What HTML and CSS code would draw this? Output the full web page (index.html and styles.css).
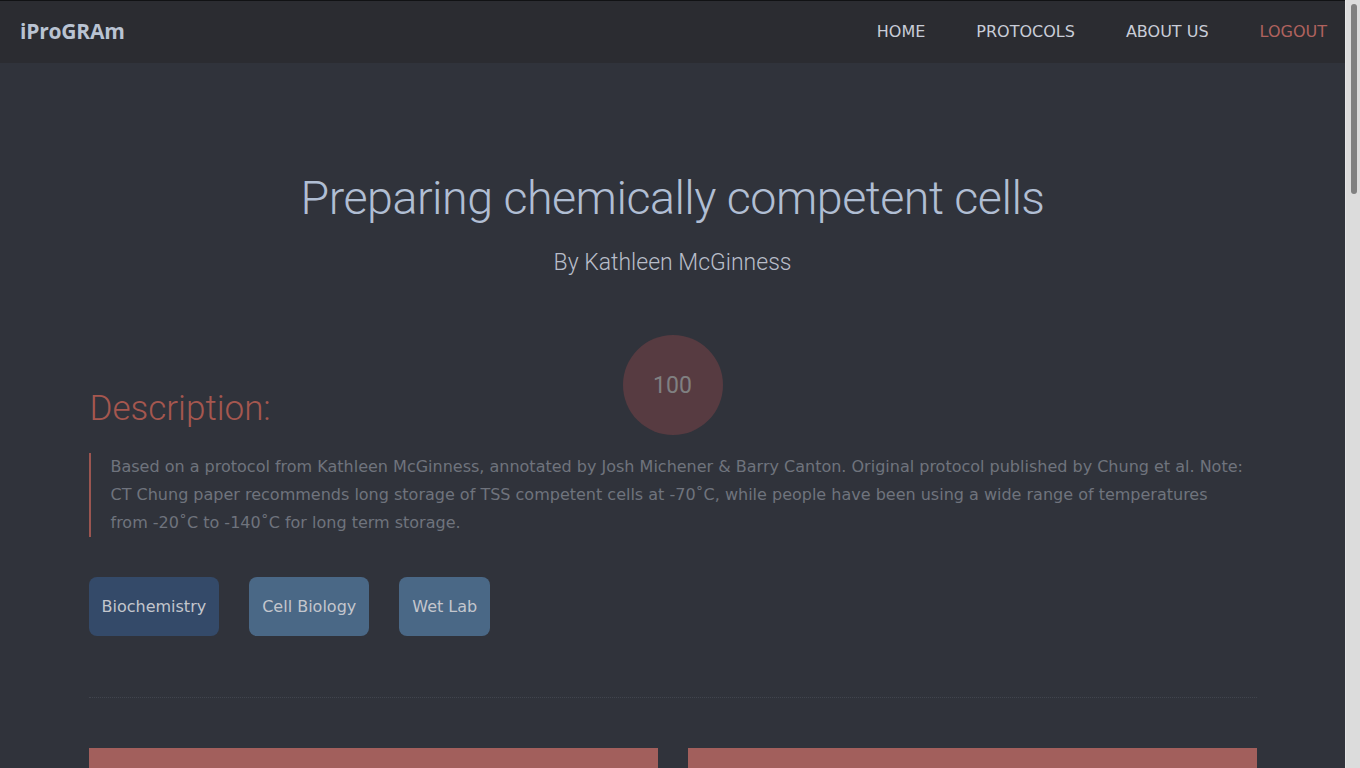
FILE: index.html
```html
<!DOCTYPE html>
<html lang="en">
<head>
<meta charset="utf-8">
<title>iProGRAm - Preparing chemically competent cells</title>
<link rel="stylesheet" href="styles.css">
</head>
<body>
<div class="viewport">
  <header class="navbar">
    <a class="brand" href="#">iProGRAm</a>
    <nav class="nav">
      <a href="#" class="nav-link">HOME</a>
      <a href="#" class="nav-link">PROTOCOLS</a>
      <a href="#" class="nav-link">ABOUT US</a>
      <a href="#" class="nav-link logout">LOGOUT</a>
    </nav>
  </header>
  <main class="page">
    <section class="hero">
      <h1 class="title">Preparing chemically competent cells</h1>
      <p class="author">By Kathleen McGinness</p>
    </section>
    <div class="container">
      <div class="desc-head">
        <div class="score">100</div>
        <h2 class="desc-title">Description:</h2>
      </div>
      <blockquote class="desc">Based on a protocol from Kathleen McGinness, annotated by Josh Michener &amp; Barry Canton. Original protocol published by Chung et al. Note: CT Chung paper recommends long storage of TSS competent cells at -70˚C, while people have been using a wide range of temperatures from -20˚C to -140˚C for long term storage.</blockquote>
      <div class="tags">
        <a href="#" class="tag tag-active">Biochemistry</a>
        <a href="#" class="tag">Cell Biology</a>
        <a href="#" class="tag">Wet Lab</a>
      </div>
      <hr class="divider">
      <div class="cards">
        <div class="card"></div>
        <div class="card"></div>
      </div>
    </div>
  </main>
</div>
<div class="scrollbar"><div class="scroll-thumb"></div></div>
</body>
</html>
```
FILE: styles.css
```css
* { box-sizing: border-box; }
html, body { margin: 0; padding: 0; }
body {
  background: #30333b;
  font-family: "DejaVu Sans", Verdana, sans-serif;
  color: #c8ccd6;
  display: flex;
  align-items: flex-start;
}
a { text-decoration: none; }

.viewport {
  flex: 1;
  min-width: 0;
}
.scrollbar {
  flex: none;
  width: 15px;
  height: 100vh;
  position: sticky;
  top: 0;
  background: #dcdcdc;
  border-left: 1px solid #e6e6e6;
  padding: 4px 3px 0 5px;
}
.scroll-thumb {
  width: 6px;
  height: 190px;
  border-radius: 3px;
  background: #808080;
}

.navbar {
  height: 63px;
  background: #2b2c31;
  border-top: 1px solid #111214;
  display: flex;
  align-items: center;
  justify-content: space-between;
  padding: 0 18px 2px 20px;
}
.brand {
  font-family: "Open Sans", sans-serif;
  font-weight: 700;
  font-size: 21px;
  letter-spacing: -0.2px;
  color: #b9c3d2;
}
.nav {
  display: flex;
  gap: 51px;
}
.nav-link {
  font-size: 16px;
  color: #c9cdd8;
}
.nav-link.logout { color: #b0625e; }

.page { padding-bottom: 400px; }

.hero {
  text-align: center;
  padding-top: 105px;
}
.title {
  margin: 0;
  font-family: Roboto, sans-serif;
  font-weight: 300;
  font-size: 46.6px;
  letter-spacing: -0.5px;
  line-height: 60px;
  color: #b0bed3;
}
.author {
  margin: 20px 0 0;
  font-family: Roboto, sans-serif;
  font-weight: 300;
  font-size: 23px;
  line-height: 30px;
  color: #b8bdc9;
}

.container {
  width: 1168px;
  margin: 0 auto;
  padding-top: 57px;
}
.desc-head {
  display: grid;
}
.score, .desc-title { grid-area: 1 / 1; }
.score {
  justify-self: center;
  align-self: start;
  width: 100px;
  height: 100px;
  border-radius: 50%;
  background: #573b41;
  color: #808081;
  display: flex;
  align-items: center;
  justify-content: center;
  font-family: Roboto, sans-serif;
  font-weight: 400;
  font-size: 23px;
}
.desc-title {
  align-self: end;
  margin: 0 0 0 1px;
  padding-bottom: 6px;
  font-family: Roboto, sans-serif;
  font-weight: 300;
  font-size: 35px;
  line-height: 40px;
  color: #a5574f;
}
.desc {
  margin: 18px 0 0;
  border-left: 2px solid #9a5550;
  padding: 0 12px 0 20px;
  font-size: 16px;
  line-height: 28px;
  color: #6f737d;
}
.tags {
  display: flex;
  gap: 30px;
  margin-top: 40px;
}
.tag {
  padding: 20px 13px;
  border-radius: 8px;
  background: #4a6886;
  color: #c3c6cd;
  font-size: 16px;
  line-height: 19px;
}
.tag-active { background: #344a69; }
.divider {
  margin: 61px 0 0;
  border: 0;
  border-top: 1px dotted #41454e;
  height: 0;
}
.cards {
  display: flex;
  gap: 30px;
  margin-top: 50px;
}
.card {
  flex: 1;
  height: 300px;
  background: #a25f5c;
}
```
